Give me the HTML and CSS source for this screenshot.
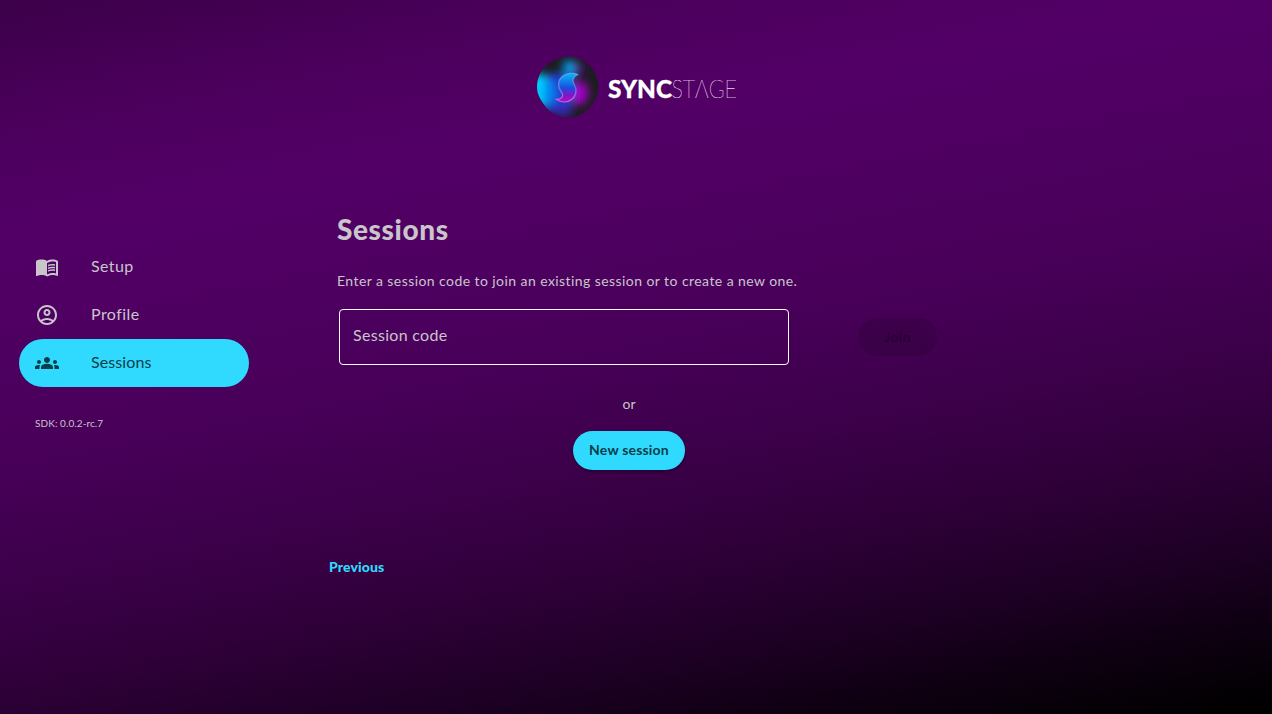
FILE: index.html
```html
<!DOCTYPE html>
<html lang="en">
<head>
<meta charset="utf-8">
<title>SyncStage</title>
<link rel="stylesheet" href="styles.css">
</head>
<body>
<div class="app">
  <header class="header">
    <svg class="logo" width="208" height="64" viewBox="0 0 208 64" role="img" aria-label="SyncStage">
      <defs>
        <clipPath id="disc"><path d="M31 1C41 0 50 5 55 11C61 18 63 28 62 34C61 43 55 51 49 56C42 61 35 62 30 61C22 61 14 57 9 50C4 43 1 38 1 31C1 22 5 14 11 9C17 4 23 1 31 1Z"/></clipPath>
        <filter id="soft" x="-80%" y="-80%" width="260%" height="260%"><feGaussianBlur stdDeviation="4.5"/></filter>
        <linearGradient id="mark" x1="0" y1="0" x2="0" y2="1">
          <stop offset="0" stop-color="#08b8f8"/><stop offset=".5" stop-color="#1850e0"/><stop offset=".78" stop-color="#8a10c8"/><stop offset="1" stop-color="#b010c0"/>
        </linearGradient>
        <linearGradient id="rim" x1="0" y1="0" x2="0" y2="1">
          <stop offset="0" stop-color="#58a8f0"/><stop offset=".5" stop-color="#6078d8"/><stop offset="1" stop-color="#d060d8"/>
        </linearGradient>
      </defs>
      <g clip-path="url(#disc)">
        <rect width="64" height="64" fill="#1e1c20"/>
        <g filter="url(#soft)">
          <ellipse cx="20" cy="37" rx="19" ry="20" fill="#1c40d8"/>
          <ellipse cx="2" cy="34" rx="11" ry="17" fill="#00d0ff"/>
          <ellipse cx="13" cy="36" rx="6" ry="12" fill="#0088f0"/>
          <ellipse cx="26" cy="55" rx="11" ry="6" fill="#3820a8"/>
          <ellipse cx="33" cy="12" rx="6" ry="8" fill="#00a0f0"/>
          <ellipse cx="43" cy="13" rx="5" ry="6" fill="#481090"/>
          <ellipse cx="44" cy="37" rx="8" ry="12" fill="#a000c8"/>
          <ellipse cx="31" cy="29" rx="7" ry="9" fill="#2038c0"/>
        </g>
      </g>
      <path d="M41.500 18.500C37 16.500 31 17 27 20C21.500 24 21.500 31 25 35.500C28.500 40 26 43 20.500 43.500C25 46.500 31 47 35.500 43.500C41 39.500 41 32.500 38 28C35.500 24 37 21 41.500 18.500Z" fill="url(#mark)" stroke="url(#rim)" stroke-width="1.300"/>
      <text class="logo-bold" x="72" y="42" textLength="64" lengthAdjust="spacingAndGlyphs">SYNC</text>
      <text class="logo-thin" x="135.500" y="42" textLength="65.500" lengthAdjust="spacingAndGlyphs">STΛGE</text>
    </svg>
  </header>
  <div class="columns">
    <nav class="sidebar">
      <a class="nav-item">
        <svg class="icon" viewBox="0 0 24 24"><path d="M21 5c-1.110-.350-2.330-.500-3.500-.500-1.950 0-4.050.400-5.500 1.500-1.450-1.100-3.550-1.500-5.500-1.500S2.450 4.900 1 6v14.650c0 .250.250.500.500.500.100 0 .150-.050.250-.050C3.100 20.450 5.050 20 6.500 20c1.950 0 4.050.400 5.500 1.500 1.350-.850 3.800-1.500 5.500-1.500 1.650 0 3.350.300 4.750 1.050.100.050.150.050.250.050.250 0 .500-.250.500-.500V6c-.600-.450-1.250-.750-2-1zm0 13.500c-1.100-.350-2.300-.500-3.500-.500-1.700 0-4.150.650-5.500 1.500V8c1.350-.850 3.800-1.500 5.500-1.500 1.200 0 2.400.150 3.500.500v11.500z"/><path d="M17.500 10.500c.880 0 1.730.090 2.500.260V9.240c-.790-.150-1.640-.240-2.500-.240-1.700 0-3.240.290-4.500.830v1.660c1.130-.640 2.700-.990 4.500-.990zM13 12.490v1.660c1.130-.640 2.700-.990 4.500-.990.880 0 1.730.090 2.500.260V11.900c-.790-.150-1.640-.240-2.500-.240-1.700 0-3.240.300-4.500.830zM17.500 14.330c-1.700 0-3.240.290-4.500.830v1.660c1.130-.640 2.700-.990 4.500-.990.880 0 1.730.090 2.500.260v-1.520c-.790-.160-1.640-.240-2.500-.240z"/></svg>
        <span class="nav-label label-setup">Setup</span>
      </a>
      <a class="nav-item">
        <svg class="icon" viewBox="0 0 24 24"><path fill-rule="evenodd" d="M12 2C6.480 2 2 6.480 2 12s4.480 10 10 10 10-4.480 10-10S17.520 2 12 2zM7.350 18.500C8.660 17.560 10.260 17 12 17s3.340.560 4.650 1.500C15.340 19.440 13.740 20 12 20s-3.340-.560-4.650-1.500zm10.790-1.380C16.450 15.800 14.320 15 12 15s-4.450.800-6.140 2.120C4.700 15.730 4 13.950 4 12c0-4.420 3.580-8 8-8s8 3.580 8 8c0 1.950-.700 3.730-1.860 5.120z"/><path fill-rule="evenodd" d="M12 6c-1.930 0-3.500 1.570-3.500 3.500S10.070 13 12 13s3.500-1.570 3.500-3.500S13.930 6 12 6zm0 5c-.830 0-1.500-.670-1.500-1.500S11.170 8 12 8s1.500.670 1.500 1.500S12.830 11 12 11z"/></svg>
        <span class="nav-label label-profile">Profile</span>
      </a>
      <a class="nav-item nav-item-active">
        <svg class="icon" viewBox="0 0 24 24"><path d="M12 12.750c1.630 0 3.070.390 4.240.900 1.080.480 1.760 1.560 1.760 2.730V18H6v-1.610c0-1.180.680-2.260 1.760-2.730 1.170-.520 2.610-.910 4.240-.910zM4 13c1.100 0 2-.900 2-2s-.900-2-2-2-2 .900-2 2 .900 2 2 2zm1.130 1.100c-.370-.060-.740-.100-1.130-.100-.990 0-1.930.210-2.780.580C.480 14.900 0 15.620 0 16.430V18h4.500v-1.610c0-.830.230-1.610.630-2.290zM20 13c1.100 0 2-.900 2-2s-.900-2-2-2-2 .900-2 2 .900 2 2 2zm4 3.430c0-.810-.480-1.530-1.220-1.850-.850-.370-1.790-.580-2.780-.580-.390 0-.760.040-1.130.100.400.680.630 1.460.630 2.290V18H24v-1.570zM12 6c1.660 0 3 1.340 3 3s-1.340 3-3 3-3-1.340-3-3 1.340-3 3-3z"/></svg>
        <span class="nav-label label-sessions">Sessions</span>
      </a>
      <p class="version">SDK: 0.0.2-rc.7</p>
    </nav>
    <main class="content">
      <h1 class="title">Sessions</h1>
      <p class="intro">Enter a session code to join an existing session or to create a new one.</p>
      <div class="join-row">
        <div class="field">Session code</div>
        <button class="btn btn-join" disabled>Join</button>
      </div>
      <div class="create">
        <span class="or">or</span>
        <button class="btn btn-new">New session</button>
      </div>
      <a class="previous">Previous</a>
    </main>
  </div>
</div>
</body>
</html>
```
FILE: styles.css
```css
* { box-sizing: border-box; }
body {
  margin: 0;
  font-family: Lato, "Liberation Sans", sans-serif;
  color: #c8c5cb;
}
.app {
  height: 714px;
  overflow: hidden;
  background: linear-gradient(169deg, #3c0049 0%, #4c005d 14%, #520066 24%, #4f0062 34%, #480059 48%, #3d004b 60%, #30003a 71%, #1e0025 82%, #0d0010 91%, #000 99%);
}
.header {
  display: flex;
  justify-content: center;
  height: 213px;
  padding: 56px 0 0 8px;
}
.logo { display: block; overflow: visible; }
.logo-bold { font-size: 25px; font-weight: 900; fill: #fff; stroke: #fff; stroke-width: .3px; }
.logo-thin { font-size: 25px; font-weight: 100; fill: #e6d8ea; stroke: #e6d8ea; stroke-width: .2px; }
.columns {
  display: grid;
  grid-template-columns: 337px 1fr;
}
.sidebar { padding: 30px 0 0 19px; }
.nav-item {
  display: flex;
  align-items: center;
  gap: 32px;
  width: 230px;
  height: 48px;
  padding: 0 16px;
  border-radius: 24px;
}
.nav-item-active { background: #30dafe; color: #073e49; }
.icon { width: 24px; height: 24px; fill: currentColor; }
.nav-label { font-size: 16px; line-height: 24px; padding-bottom: 2px; }
.label-setup { letter-spacing: 0.4px; }
.label-profile { letter-spacing: 0.45px; }
.label-sessions { letter-spacing: 0.1px; }
.version {
  margin: 29px 0 0 16px;
  font-size: 10px;
  line-height: 14px;
  letter-spacing: 0.08px;
}
.title {
  margin: 0;
  font-size: 28px;
  line-height: 32px;
  font-weight: 900;
  letter-spacing: 0.6px;
}
.intro {
  margin: 26px 0 0;
  font-size: 14px;
  line-height: 20px;
  letter-spacing: 0.43px;
}
.join-row {
  display: flex;
  align-items: center;
  gap: 69px;
  margin: 18px 0 0 2px;
}
.field {
  width: 450px;
  height: 56px;
  padding: 0 13px;
  border: 1px solid #fff;
  border-radius: 4px;
  font-size: 16px;
  line-height: 50px;
  letter-spacing: 0.3px;
}
.btn {
  height: 39px;
  padding: 0 0 2px;
  border: 0;
  border-radius: 20px;
  font-family: inherit;
  font-size: 14px;
  font-weight: 700;
  letter-spacing: 0.2px;
}
.btn-join { width: 79px; height: 38px; background: rgba(0, 0, 0, .12); color: rgba(0, 0, 0, .3); }
.btn-new {
  width: 112px;
  background: #30dafe;
  color: #073e49;
  box-shadow: 0 2px 3px rgba(0, 0, 0, .3);
}
.create {
  display: flex;
  flex-direction: column;
  align-items: center;
  gap: 17px;
  width: 584px;
  padding-top: 29px;
}
.or { font-size: 14px; line-height: 20px; }
.previous {
  display: block;
  margin: 87px 0 0 -8px;
  font-size: 14px;
  line-height: 20px;
  font-weight: 900;
  letter-spacing: 0.1px;
  color: #30dafe;
}
```
